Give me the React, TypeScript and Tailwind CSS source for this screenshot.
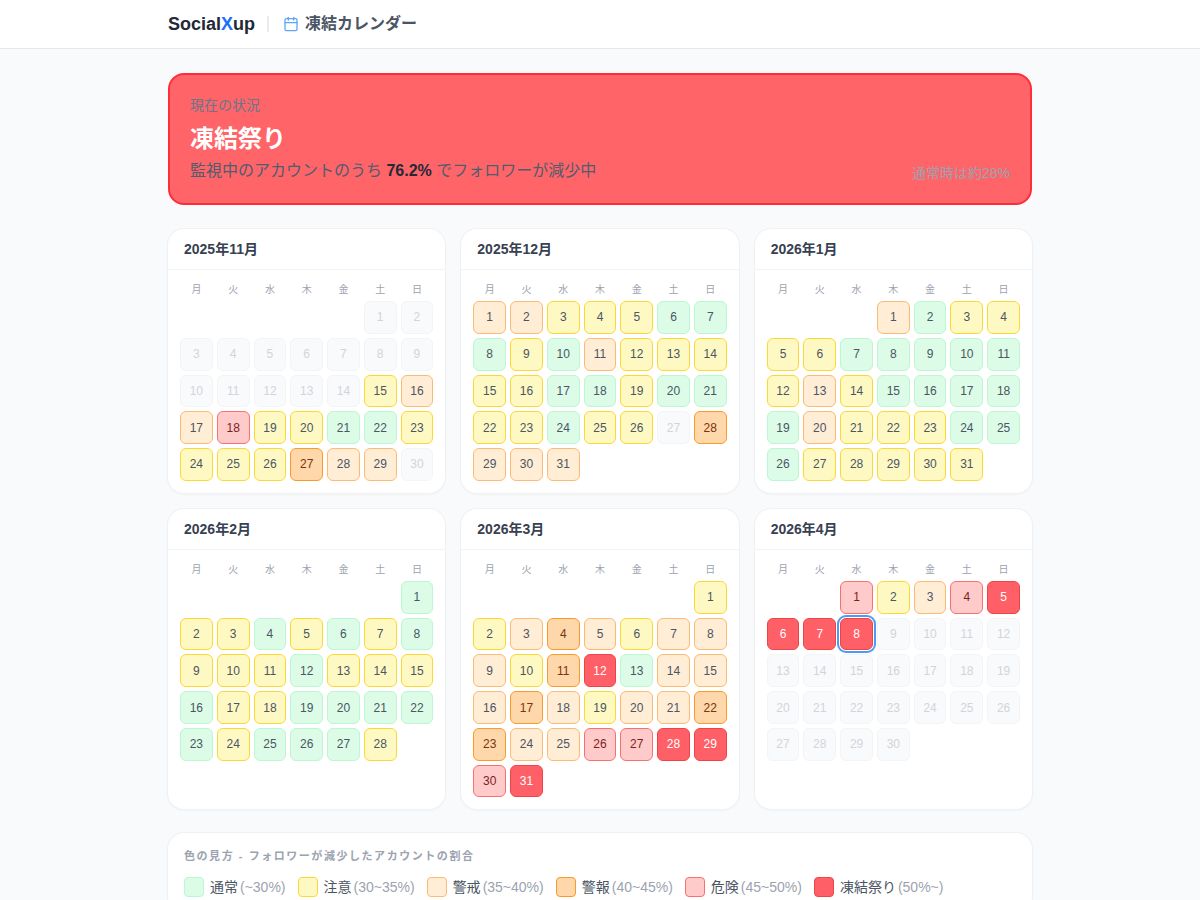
import { Calendar } from "lucide-react";

type Level = "n" | "c" | "w" | "a" | "d" | "f" | "x";

const levelStyles: Record<Level, string> = {
    n: "bg-[#dcfce7] border-[#bbf7d0] text-[#4b5563]",
    c: "bg-[#fef9c3] border-[#fdd835] text-[#4b5563]",
    w: "bg-[#ffedd5] border-[#fdba74] text-[#4b5563]",
    a: "bg-[#fed7aa] border-[#fb9a26] text-[#78350f]",
    d: "bg-[#fecaca] border-[#f87171] text-[#7f1d1d]",
    f: "bg-[#ff6067] border-[#ef4444] text-white",
    x: "bg-[#f9fafb] border-[#f3f4f6] text-[#d1d5db]",
};

const weekdays = ["月", "火", "水", "木", "金", "土", "日"];

const months: { title: string; offset: number; days: string; today?: number }[] = [
    { title: "2025年11月", offset: 5, days: "xxxxxxxxxxxxxxcwwdccnnccccawwx" },
    { title: "2025年12月", offset: 0, days: "wwcccnnncnwcccccnncnnccnccxawww" },
    { title: "2026年1月", offset: 3, days: "wnccccnnnnncwcnnnnnwcccnnnccccc" },
    { title: "2026年2月", offset: 6, days: "nccncncncccncccnccnnnnncnnnc" },
    { title: "2026年3月", offset: 6, days: "ccwawcwwwcafnwwwawcwwaawwddffdf" },
    { title: "2026年4月", offset: 2, days: "dcwdffffxxxxxxxxxxxxxxxxxxxxxx", today: 8 },
];

const legend: { level: Level; label: string; range: string }[] = [
    { level: "n", label: "通常", range: "(~30%)" },
    { level: "c", label: "注意", range: "(30~35%)" },
    { level: "w", label: "警戒", range: "(35~40%)" },
    { level: "a", label: "警報", range: "(40~45%)" },
    { level: "d", label: "危険", range: "(45~50%)" },
    { level: "f", label: "凍結祭り", range: "(50%~)" },
];

function MonthCard({ title, offset, days, today }: { title: string; offset: number; days: string; today?: number }) {
    return (
        <div className="bg-white rounded-2xl shadow-[0_0_0_1px_#f0f1f4,0_1px_3px_rgba(0,0,0,0.06)] overflow-hidden">
            <div className="h-[41px] px-4 flex items-center border-b border-[#f3f4f6] text-sm font-bold text-[#374151]">
                {title}
            </div>
            <div className="p-3">
                <div className="grid grid-cols-7 gap-x-1 h-[19px]">
                    {weekdays.map((d) => (
                        <div key={d} className="text-center text-[10px] leading-[15px] text-[#9ca3af]">
                            {d}
                        </div>
                    ))}
                </div>
                <div className="grid grid-cols-7 gap-1">
                    {Array.from({ length: offset }).map((_, i) => (
                        <div key={i} />
                    ))}
                    {days.split("").map((level, i) => (
                        <div
                            key={i}
                            className={`aspect-square rounded-md border flex items-center justify-center text-xs ${levelStyles[level as Level]} ${
                                today === i + 1 ? "ring-2 ring-[#4a9cf6] ring-offset-1" : ""
                            }`}
                        >
                            {i + 1}
                        </div>
                    ))}
                </div>
            </div>
        </div>
    );
}

export default function App() {
    return (
        <div className="min-h-screen bg-[#f9fafb] font-['Liberation_Sans','Noto_Sans_CJK_JP',sans-serif]">
            <header className="h-[49px] bg-white border-b border-[#e5e7eb]">
                <div className="w-[864px] mx-auto h-full flex items-center">
                    <div className="text-lg font-bold text-[#1f2937]">
                        Social<span className="text-[#1a6dff]">X</span>up
                    </div>
                    <div className="w-0.5 h-4 bg-[#e9ebef] ml-3 mr-3.5" />
                    <Calendar className="w-4 h-4 text-[#60a5fa] mr-1.5" />
                    <div className="text-base font-semibold text-[#4b5563]">凍結カレンダー</div>
                </div>
            </header>
            <main className="w-[864px] mx-auto pt-6 flex flex-col gap-6">
                <div className="bg-[#ff6468] border-2 border-[#ff2d3a] rounded-2xl h-[132px] px-5 pt-5 flex flex-col">
                    <div className="text-sm leading-5 text-[#6b7688]">現在の状況</div>
                    <div className="text-2xl leading-8 font-bold text-white mt-2">凍結祭り</div>
                    <div className="flex justify-between items-end mt-1">
                        <div className="text-base leading-6 text-[#4f5d6e]">
                            監視中のアカウントのうち <span className="font-bold text-[#1f2937]">76.2%</span> でフォロワーが減少中
                        </div>
                        <div className="text-sm text-[#9ca3af]">通常時は約28%</div>
                    </div>
                </div>
                <div className="grid grid-cols-3 gap-4">
                    {months.map((m) => (
                        <MonthCard key={m.title} {...m} />
                    ))}
                </div>
                <div className="bg-white rounded-2xl shadow-[0_0_0_1px_#f0f1f4,0_1px_3px_rgba(0,0,0,0.06)] px-4 pt-[15px] pb-4">
                    <div className="text-[11px] leading-4 font-bold tracking-[1.55px] text-[#9ca3af] mb-[13px]">
                        色の見方 - フォロワーが減少したアカウントの割合
                    </div>
                    <div className="flex gap-3 flex-wrap">
                        {legend.map((l) => (
                            <div key={l.level} className="flex items-center text-sm">
                                <div className={`w-5 h-5 rounded border mr-[6px] ${levelStyles[l.level]}`} />
                                <span className="text-[#4b5563]">{l.label}</span>
                                <span className="text-[#9ca3af] ml-0.5">{l.range}</span>
                            </div>
                        ))}
                    </div>
                </div>
            </main>
        </div>
    );
}
